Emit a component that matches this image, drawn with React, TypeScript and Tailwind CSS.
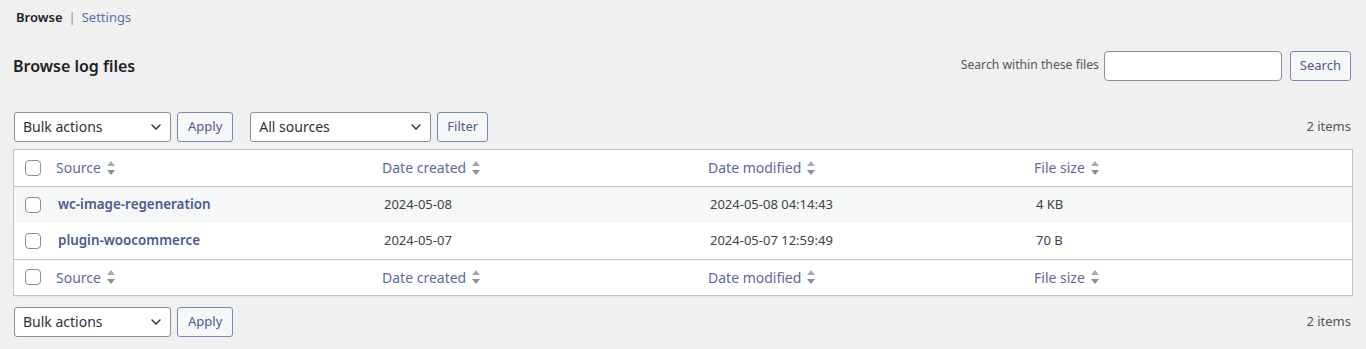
import { ChevronDown } from "lucide-react";

const link = "text-[#4a5a94]";

function SortIcon() {
  return (
    <svg width="8" height="14" viewBox="0 0 8 14" className="ml-[6px] inline-block">
      <path d="M4 0 L8 5 H0 Z" fill="#a7aaad" />
      <path d="M4 14 L8 9 H0 Z" fill="#8c8f94" />
    </svg>
  );
}

function Checkbox() {
  return (
    <span className="block w-4 h-4 rounded-[4px] border border-[#8c8f94] bg-white" />
  );
}

function Select({ label, width }: { label: string; width: string }) {
  return (
    <div
      className={`${width} h-[30px] flex items-center justify-between pl-2 pr-[6px] bg-white border border-[#8c8f94] rounded-[3px] text-[14px] text-[#2c3338]`}
    >
      <span>{label}</span>
      <ChevronDown className="w-4 h-4 text-[#2c3338]" strokeWidth={2.2} />
    </div>
  );
}

function Button({ label, pad = "px-[10px]" }: { label: string; pad?: string }) {
  return (
    <button
      className={`h-[30px] ${pad} bg-[#f6f7f7] border border-[#7a88b8] rounded-[3px] text-[13px] text-[#4a5a94]`}
    >
      {label}
    </button>
  );
}

function HeaderRow({ bottom }: { bottom?: boolean }) {
  const cols = ["Source", "Date created", "Date modified", "File size"];
  return (
    <div
      className={`flex items-center bg-white ${
        bottom ? "h-[36px] border-t" : "h-[37px] border-b"
      } border-[#c3c4c7]`}
    >
      <div className="w-[34px] pl-[11px] shrink-0">
        <Checkbox />
      </div>
      {cols.map((c) => (
        <div
          key={c}
          className="w-[326px] shrink-0 pl-[8px] flex items-center text-[14px] text-[#5b6a9e]"
        >
          {c}
          <SortIcon />
        </div>
      ))}
    </div>
  );
}

export default function App() {
  const rows = [
    {
      source: "wc-image-regeneration",
      created: "2024-05-08",
      modified: "2024-05-08 04:14:43",
      size: "4 KB",
    },
    {
      source: "plugin-woocommerce",
      created: "2024-05-07",
      modified: "2024-05-07 12:59:49",
      size: "70 B",
    },
  ];

  return (
    <div
      className="w-[1366px] h-[349px] bg-[#f0f0f1] text-[#3c434a] overflow-hidden"
      style={{ fontFamily: '"Noto Sans", "Open Sans", sans-serif' }}
    >
      <div className="pl-[16px] pt-[8px] text-[13px] flex items-center">
        <span className="font-semibold text-[#1d2327]">Browse</span>
        <span className="mx-[6px] text-[#8c8f94]">|</span>
        <span className="text-[#6170a6]">Settings</span>
      </div>

      <div className="flex items-center justify-between pl-[13px] pr-[15px] mt-[23px]">
        <h1 className="text-[16px] font-semibold text-[#1d2327]">Browse log files</h1>
        <div className="flex items-center">
          <span className="text-[12.2px] text-[#50575e] mr-[5px]">Search within these files</span>
          <div className="w-[178px] h-[30px] bg-white border border-[#8c8f94] rounded-[4px]" />
          <div className="ml-[8px]">
            <Button label="Search" pad="px-[9px]" />
          </div>
        </div>
      </div>

      <div className="flex items-center justify-between pl-[14px] pr-[15px] mt-[31px]">
        <div className="flex items-center">
          <Select label="Bulk actions" width="w-[157px]" />
          <div className="ml-[6px]">
            <Button label="Apply" />
          </div>
          <div className="ml-[17px]">
            <Select label="All sources" width="w-[181px]" />
          </div>
          <div className="ml-[6px]">
            <Button label="Filter" pad="px-[9px]" />
          </div>
        </div>
        <span className="text-[13px] text-[#50575e]">2 items</span>
      </div>

      <div className="mx-[13px] mt-[7px] border border-[#c3c4c7] bg-white shadow-[0_1px_1px_rgba(0,0,0,0.04)]">
        <HeaderRow />
        {rows.map((r, i) => (
          <div
            key={r.source}
            className={`flex items-center h-[36px] text-[13px] ${
              i % 2 === 0 ? "bg-[#f6f7f7]" : "bg-white"
            }`}
          >
            <div className="w-[34px] pl-[11px] shrink-0">
              <Checkbox />
            </div>
            <div className={`w-[326px] shrink-0 pl-[10px] font-semibold text-[13.4px] ${link}`}>
              {r.source}
            </div>
            <div className="w-[326px] shrink-0 pl-[10px]">{r.created}</div>
            <div className="w-[326px] shrink-0 pl-[10px]">{r.modified}</div>
            <div className="w-[326px] shrink-0 pl-[10px]">{r.size}</div>
          </div>
        ))}
        <HeaderRow bottom />
      </div>

      <div className="flex items-center justify-between pl-[14px] pr-[15px] mt-[11px]">
        <div className="flex items-center">
          <Select label="Bulk actions" width="w-[157px]" />
          <div className="ml-[6px]">
            <Button label="Apply" />
          </div>
        </div>
        <span className="text-[13px] text-[#50575e]">2 items</span>
      </div>
    </div>
  );
}
